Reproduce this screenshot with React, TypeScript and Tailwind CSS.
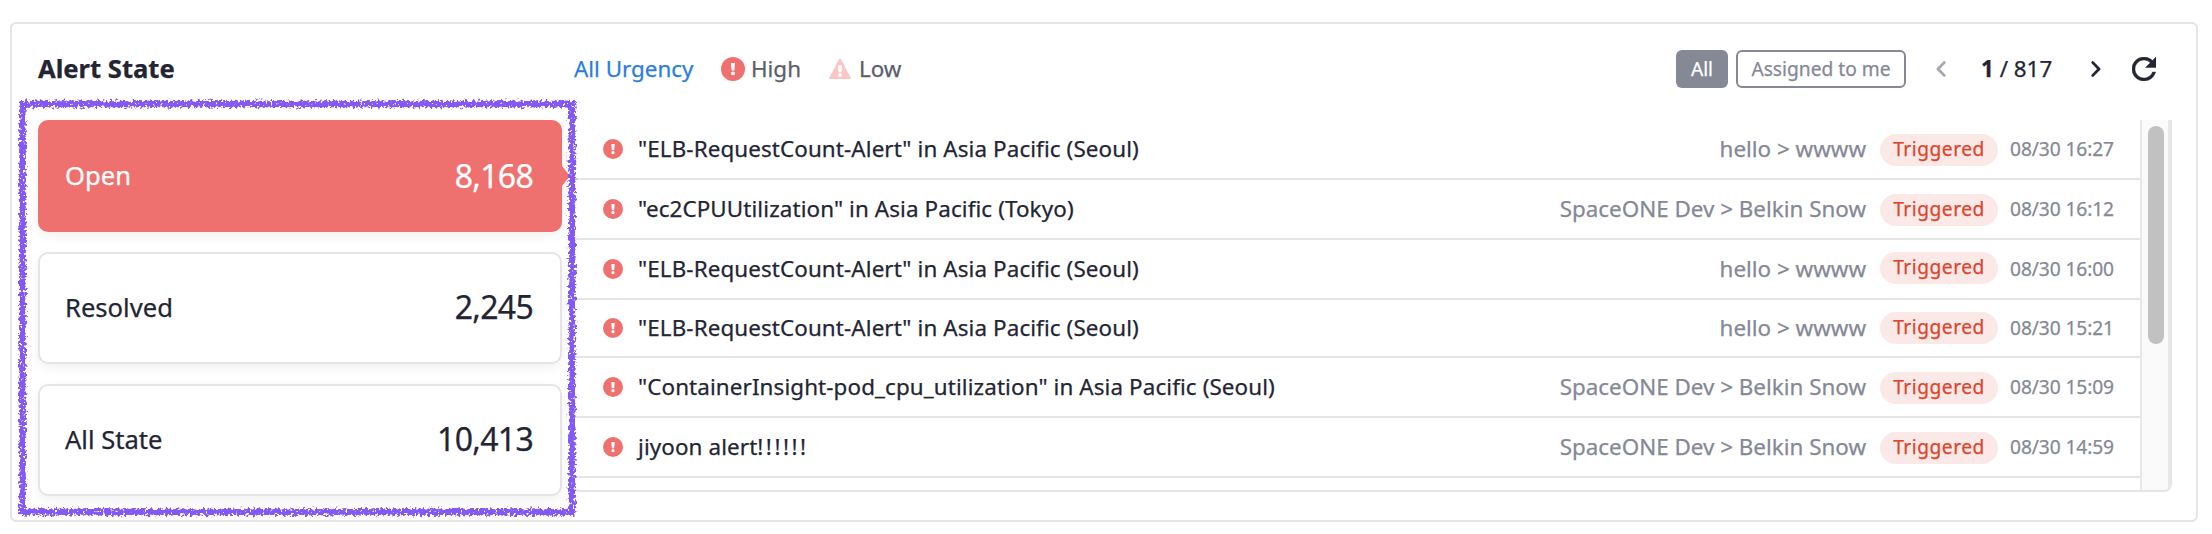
import React from "react";

type IconProps = { size: number };

function HighIcon({ size }: IconProps) {
  return (
    <svg width={size} height={size} viewBox="0 0 24 24" className="shrink-0">
      <circle cx="12" cy="12" r="12" fill="#ef716f" />
      <path d="M10 6h4l-.6 7.4h-2.8z" fill="#fff" />
      <circle cx="12" cy="16.4" r="1.9" fill="#fff" />
    </svg>
  );
}

function LowIcon() {
  return (
    <svg width="22" height="22" viewBox="0 0 22 22" className="shrink-0">
      <path d="M11 1.5 20.7 20H1.3z" fill="#f8c6c5" stroke="#f8c6c5" strokeWidth="2" strokeLinejoin="round" />
      <path d="M9 7.5h4l-.6 6.8H9.6z" fill="#fff" />
      <circle cx="11" cy="17" r="1.9" fill="#fff" />
    </svg>
  );
}

const states = [
  { name: "Open", count: "8,168" },
  { name: "Resolved", count: "2,245" },
  { name: "All State", count: "10,413" },
];

const elb = '"ELB-RequestCount-Alert" in Asia Pacific (Seoul)';
const dev = "SpaceONE Dev > Belkin Snow";
const alerts = [
  { title: elb, tail: "", project: "hello > wwww", time: "08/30 16:27", h: "h-[60px]", pill: "mt-[2px]" },
  { title: '"ec2CPUUtilization" in Asia Pacific (Tokyo)', tail: "", project: dev, time: "08/30 16:12", h: "h-[60px]", pill: "mt-[2px]" },
  { title: elb, tail: "", project: "hello > wwww", time: "08/30 16:00", h: "h-[60px]", pill: "mb-[2px]" },
  { title: elb, tail: "", project: "hello > wwww", time: "08/30 15:21", h: "h-[58px]", pill: "" },
  { title: '"ContainerInsight-pod_cpu_utilization" in Asia Pacific (Seoul)', tail: "", project: dev, time: "08/30 15:09", h: "h-[60px]", pill: "mt-[2px]" },
  { title: "jiyoon alert", tail: "!!!!!!", project: dev, time: "08/30 14:59", h: "h-[60px]", pill: "mt-[2px]" },
];

// A rough, crayon-like frame around the state cards.
function CrayonFrame() {
  return (
    <svg className="pointer-events-none absolute left-[6px] top-[74px]" width="560" height="420" viewBox="0 0 560 420">
      <filter id="crayon" filterUnits="userSpaceOnUse" x="0" y="0" width="560" height="420" colorInterpolationFilters="sRGB">
        <feTurbulence type="fractalNoise" baseFrequency="0.4" numOctaves="2" seed="4" />
        <feColorMatrix type="matrix" values="0 0 0 0 0  0 0 0 0 0  0 0 0 0 0  1 0 0 0 0" result="noise" />
        <feGaussianBlur in="SourceAlpha" stdDeviation="1.6" result="soft" />
        <feMorphology in="SourceAlpha" operator="dilate" radius="2" result="area" />
        <feComposite in="soft" in2="noise" operator="arithmetic" k1="0" k2="5" k3="10" k4="-7.3" result="mask" />
        <feComposite in="mask" in2="area" operator="in" result="edge" />
        <feFlood floodColor="#8358f6" />
        <feComposite in2="edge" operator="in" />
      </filter>
      <rect x="4.5" y="6" width="549.5" height="408" fill="none" stroke="#8358f6" strokeWidth="7" filter="url(#crayon)" />
    </svg>
  );
}

export default function App() {
  return (
    <div className="h-[534px] w-[2212px] bg-white pl-[10px] pt-[22px] font-['Noto_Sans',sans-serif] text-[#232533] [-webkit-text-stroke:0.25px]">
      <div className="relative flex h-[500px] w-[2188px] flex-col rounded-[6px] border-2 border-[#e5e5e5]">
        <div className="flex h-[96px] shrink-0 items-center pb-[6px] pl-[26px] pr-[40px]">
          <h2 className="w-[536px] text-[25.6px] font-bold">Alert State</h2>
          <div className="flex items-center text-[22.4px] text-[#5c5e6b]">
            <span className="w-[147px] text-[#2b7de0]">All Urgency</span>
            <span className="flex w-[108px] items-center gap-[6px]"><HighIcon size={24} />High</span>
            <span className="flex items-center gap-[8px]"><LowIcon />Low</span>
          </div>
          <div className="ml-auto flex items-center">
            <button className="h-[38px] w-[52px] rounded-[6px] bg-[#858895] text-[19.2px] text-white">All</button>
            <button className="ml-[8px] h-[38px] w-[170px] rounded-[6px] border-2 border-[#858895] text-[19.2px] text-[#858895]">Assigned to me</button>
            <svg className="ml-[30px]" width="10" height="16" viewBox="0 0 10 16" fill="none" stroke="#a5a6b0" strokeWidth="2.8" strokeLinecap="round" strokeLinejoin="round"><path d="M8.2 1.6 2 8l6.2 6.4" /></svg>
            <span className="ml-[35px] w-[75px] whitespace-pre text-[22.4px]"><b>1</b> / 817</span>
            <svg className="ml-[35px]" width="10" height="16" viewBox="0 0 10 16" fill="none" stroke="#232533" strokeWidth="2.8" strokeLinecap="round" strokeLinejoin="round"><path d="M1.8 1.6 8 8l-6.2 6.4" /></svg>
            <svg className="ml-[31px]" width="24" height="24" viewBox="4 4 16 16" fill="#232533" stroke="#232533" strokeWidth="0.3">
              <path d="M17.65 6.35C16.2 4.9 14.21 4 12 4c-4.42 0-7.99 3.58-7.99 8s3.57 8 7.99 8c3.73 0 6.84-2.55 7.73-6h-2.08c-.82 2.33-3.04 4-5.65 4-3.31 0-6-2.69-6-6s2.69-6 6-6c1.66 0 3.14.69 4.22 1.78L13 11h7V4l-2.35 2.35z" />
            </svg>
          </div>
        </div>
        <div className="flex pl-[26px]">
          <div className="flex w-[524px] flex-col gap-[20px]">
            {states.map((s, i) => (
              <div
                key={s.name}
                className={
                  i === 0
                    ? "relative flex h-[112px] items-center justify-between rounded-[10px] bg-[#ef716f] pl-[27px] pr-[29px] text-white shadow-[0_4px_12px_rgba(0,0,0,0.06)]"
                    : "flex h-[112px] items-center justify-between rounded-[10px] border-2 border-[#e5e5e5] bg-white pl-[25px] pr-[27px] shadow-[0_4px_12px_rgba(0,0,0,0.06)]"
                }
              >
                <span className="text-[25.6px]">{s.name}</span>
                <span className={i === 0 ? "text-[32px] tracking-[-0.7px]" : "pb-[3px] text-[32px] tracking-[-0.7px]"}>{s.count}</span>
                {i === 0 && (
                  <svg className="absolute -right-[8px] top-[46px]" width="9" height="20" viewBox="0 0 9 20"><path d="M0 0h1l8 10-8 10H0z" fill="#ef716f" /></svg>
                )}
              </div>
            ))}
          </div>
          <div className="ml-[10px] flex h-[372px] w-[1600px] overflow-hidden rounded-b-[8px] border-b-2 border-l-2 border-r-2 border-[#e5e5e5]">
            <div className="flex-1">
              {alerts.map((a, i) => (
                <div key={i} className={`flex items-center border-b-2 border-[#e5e5e5] pl-[29px] pr-[26px] ${a.h}`}>
                  <HighIcon size={20} />
                  <span className="ml-[15px] text-[22.4px] tracking-[0.11px]">{a.title}<span className="tracking-[2.5px]">{a.tail}</span></span>
                  <span className="ml-auto text-[22.4px] text-[#858895]">{a.project}</span>
                  <span className={`ml-[14px] flex h-[32px] w-[118px] items-center justify-center rounded-full bg-[#fbe9e8] pb-[2px] text-[19.2px] tracking-[0.5px] text-[#de452c] ${a.pill}`}>Triggered</span>
                  <span className="ml-[12px] w-[104px] whitespace-nowrap text-[19.2px] tracking-[-0.1px] text-[#858895]">{a.time}</span>
                </div>
              ))}
            </div>
            <div className="w-[30px] border-x-2 border-[#e8e8e8] bg-[#fafafa] pl-[6px] pt-[6px]">
              <div className="h-[218px] w-[16px] rounded-full bg-[#c1c1c1]" />
            </div>
          </div>
        </div>
        <CrayonFrame />
      </div>
    </div>
  );
}
